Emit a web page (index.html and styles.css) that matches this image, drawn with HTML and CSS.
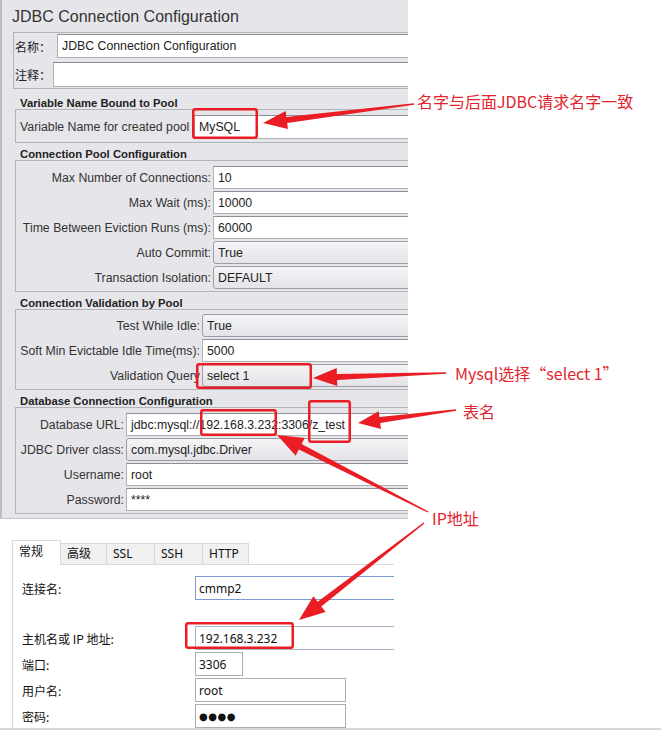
FILE: index.html
```html
<!DOCTYPE html>
<html>
  <head>
    <meta charset="utf-8" />
    <title>JDBC Connection Configuration</title>
    <meta name="viewport" content="width=device-width, initial-scale=1" />
    <link rel="stylesheet" href="styles.css">
  </head>
  <body>
    <div class="page">

      <!-- jmeter config panel -->
      <div class="jm">
        <div class="jm-title">JDBC Connection Configuration</div>

        <div class="jm-namebox">
          <div class="jm-namerow jm-namerow-first">
            <div class="jm-namelabel name-w1">名称：</div>
            <div class="jm-input">JDBC Connection Configuration</div>
          </div>
          <div class="jm-namerow jm-namerow-second">
            <div class="jm-namelabel name-w2">注释：</div>
            <div class="jm-input"></div>
          </div>
        </div>

        <div class="jm-legend">Variable Name Bound to Pool</div>
        <div class="jm-group jm-group-pool">
          <div class="jm-row jm-row-tall">
            <div class="jm-label label-left w-172">Variable Name for created pool</div>
            <div class="jm-input">MySQL</div>
          </div>
        </div>

        <div class="jm-legend">Connection Pool Configuration</div>
        <div class="jm-group">
          <div class="jm-row">
            <div class="jm-label w-191">Max Number of Connections:</div>
            <div class="jm-input">10</div>
          </div>
          <div class="jm-row">
            <div class="jm-label w-191">Max Wait (ms):</div>
            <div class="jm-input">10000</div>
          </div>
          <div class="jm-row">
            <div class="jm-label w-191">Time Between Eviction Runs (ms):</div>
            <div class="jm-input">60000</div>
          </div>
          <div class="jm-row">
            <div class="jm-label w-191">Auto Commit:</div>
            <div class="jm-combo">True</div>
          </div>
          <div class="jm-row">
            <div class="jm-label w-191">Transaction Isolation:</div>
            <div class="jm-combo">DEFAULT</div>
          </div>
        </div>

        <div class="jm-legend">Connection Validation by Pool</div>
        <div class="jm-group jm-group-valid">
          <div class="jm-row">
            <div class="jm-label w-180">Test While Idle:</div>
            <div class="jm-combo">True</div>
          </div>
          <div class="jm-row">
            <div class="jm-label w-180">Soft Min Evictable Idle Time(ms):</div>
            <div class="jm-input">5000</div>
          </div>
          <div class="jm-row">
            <div class="jm-label w-180">Validation Query</div>
            <div class="jm-combo">select 1</div>
          </div>
        </div>

        <div class="jm-legend">Database Connection Configuration</div>
        <div class="jm-group">
          <div class="jm-row">
            <div class="jm-label w-104">Database URL:</div>
            <div class="jm-input">jdbc:mysql://192.168.3.232:3306/z_test</div>
          </div>
          <div class="jm-row">
            <div class="jm-label w-104">JDBC Driver class:</div>
            <div class="jm-combo">com.mysql.jdbc.Driver</div>
          </div>
          <div class="jm-row">
            <div class="jm-label w-104">Username:</div>
            <div class="jm-input">root</div>
          </div>
          <div class="jm-row">
            <div class="jm-label w-104">Password:</div>
            <div class="jm-input">****</div>
          </div>
        </div>
      </div>

      <!-- navicat connection dialog -->
      <div class="nv">
        <div class="nv-tabs">
          <div class="nv-tab is-active">常规</div>
          <div class="nv-tab tab-46">高级</div>
          <div class="nv-tab tab-48">SSL</div>
          <div class="nv-tab tab-48">SSH</div>
          <div class="nv-tab tab-46">HTTP</div>
        </div>
        <div class="nv-panel">
          <div class="nv-row nv-row-gap">
            <div class="nv-label">连接名:</div>
            <div class="nv-input is-focus">cmmp2</div>
          </div>
          <div class="nv-row">
            <div class="nv-label">主机名或 IP 地址:</div>
            <div class="nv-input is-host">192.168.3.232</div>
          </div>
          <div class="nv-row">
            <div class="nv-label">端口:</div>
            <div class="nv-input is-port">3306</div>
          </div>
          <div class="nv-row">
            <div class="nv-label">用户名:</div>
            <div class="nv-input is-short">root</div>
          </div>
          <div class="nv-row">
            <div class="nv-label">密码:</div>
            <div class="nv-input is-short nv-dots">●●●●</div>
          </div>
        </div>
      </div>

      <!-- annotations drawn over the screenshots -->
      <svg class="marks" width="661" height="730" viewBox="0 0 661 730">
        <g fill="none" stroke="#ea1c24" stroke-width="2.5">
          <rect x="193.25" y="109.25" width="63.5" height="28.5" rx="2" />
          <rect x="197.25" y="364.25" width="113.5" height="23.5" rx="2" />
          <rect x="201.25" y="410.25" width="74.5" height="24.5" rx="2" />
          <rect x="309.25" y="401.25" width="40.5" height="40.5" rx="2" />
          <rect x="186.25" y="623.25" width="106.5" height="24.5" rx="2" />
        </g>
        <g fill="#ea1c24">
          <polygon points="413.9,103.3 286.4,117 285.7,111.1 263,123 287.9,128.9 287.2,123 414.1,104.7" />
          <polygon points="446,372.3 336.9,374.1 336.7,368.1 313,378 337.3,386.1 337.1,380.1 446,373.7" />
          <polygon points="455.9,409.3 379.4,417.1 378.6,411.2 358,423 381,429 380.2,423.1 456.1,410.7" />
          <polygon points="428.3,511.4 301.6,444.1 304.7,437.9 277,435 295.7,455.7 298.8,449.5 427.7,512.6" />
          <polygon points="423.6,522.4 317.7,601.7 313.4,596.2 299,620 325.6,612 321.3,606.5 424.4,523.6" />
        </g>
      </svg>

      <div class="note note-name">名字与后面JDBC请求名字一致</div>
      <div class="note note-query">Mysql选择“select 1”</div>
      <div class="note note-table">表名</div>
      <div class="note note-ip">IP地址</div>
    </div>
  </body>
</html>
```

FILE: styles.css
```css
body {
  margin: 0;
  background: #fff;
}

.page {
  position: relative;
  width: 661px;
  height: 730px;
  overflow: hidden;
  background: #fff;
}

/* jmeter panel */

.jm {
  width: 408px;
  height: 518px;
  overflow: hidden;
  background: #e6e6ea;
  box-shadow: inset 2px 0 #bdbdc3;
  border-bottom: 1px solid #c6c6cc;
  font-family: "Liberation Sans", Arial, "Noto Sans CJK SC", sans-serif;
  font-size: 12.3px;
  color: #333;
}

.jm-title {
  height: 30px;
  padding-top: 2px;
  line-height: 30px;
  padding-left: 12px;
  font-size: 16px;
  color: #333;
}

.jm-namebox {
  width: 440px;
  margin-left: 13px;
  padding: 1px 0 1px 1px;
  border: 1px solid #b3b3ba;
  margin-bottom: 3px;
}

.jm-namerow {
  display: flex;
  align-items: stretch;
}

.jm-namerow-first {
  height: 24px;
}

.jm-namerow-second {
  height: 25px;
  margin-top: 4px;
}

.jm-namelabel {
  display: flex;
  align-items: center;
  font-family: "Noto Sans CJK SC", sans-serif;
  font-size: 12px;
  color: #222;
}

.name-w1 {
  width: 42px;
}

.name-w2 {
  width: 38px;
}

.jm-legend {
  height: 17px;
  padding: 4px 0 0 20px;
  box-sizing: border-box;
  line-height: 14px;
  font-size: 11.3px;
  font-weight: bold;
  color: #222;
}

.jm-group {
  width: 440px;
  margin-left: 15px;
  padding: 5px 0 2px 4px;
  border: 1px solid #b3b3ba;
}

.jm-group-pool {
  padding-bottom: 3px;
}

.jm-group-valid {
  padding-top: 4px;
}

.jm-row {
  display: flex;
  align-items: stretch;
  height: 23px;
}

.jm-row + .jm-row {
  margin-top: 2px;
}

.jm-row-tall {
  height: 24px;
}

.jm-label {
  margin-right: 2px;
  text-align: right;
  white-space: nowrap;
  display: flex;
  align-items: center;
  justify-content: flex-end;
}

.label-left {
  justify-content: flex-start;
}

.w-172 { width: 172px; }
.w-191 { width: 191px; }
.w-180 { width: 180px; }
.w-104 { width: 104px; }

.jm-input,
.jm-combo {
  flex: 1;
  display: flex;
  align-items: center;
  padding-left: 4px;
  box-sizing: border-box;
  color: #222;
  white-space: nowrap;
}

.jm-input {
  background: #fff;
  border: 1px solid #b0b0b7;
  border-top-color: #8d8d95;
}

.jm-combo {
  background: linear-gradient(#f5f5f7, #e3e3e8);
  border: 1px solid #9d9da6;
  border-radius: 3px 0 0 3px;
}

/* navicat dialog */

.nv {
  height: 211px;
  box-sizing: border-box;
  padding-top: 21px;
  border-bottom: 2px solid #d6d6d6;
  font-family: "Noto Sans", "Noto Sans CJK SC", sans-serif;
  font-size: 12px;
  color: #111;
}

.nv-tabs {
  display: flex;
  align-items: flex-end;
  height: 24px;
  margin-left: 12px;
}

.nv-tab {
  height: 21px;
  box-sizing: border-box;
  padding-left: 6px;
  line-height: 19px;
  background: #f0f0f0;
  border: 1px solid #d9d9d9;
  border-left: none;
  border-bottom: none;
}

.nv-tab.is-active {
  width: 49px;
  height: 25px;
  margin-bottom: -1px;
  background: #fff;
  border-left: 1px solid #d9d9d9;
  line-height: 22px;
  position: relative;
}

.tab-46 { width: 46px; }
.tab-48 { width: 48px; }

.nv-panel {
  width: 382px;
  height: 170px;
  overflow: hidden;
  margin-left: 12px;
  padding-top: 11px;
  border-top: 1px solid #d9d9d9;
  border-left: 1px solid #d9d9d9;
  box-sizing: border-box;
}

.nv-row {
  display: flex;
  align-items: stretch;
  height: 24px;
}

.nv-row + .nv-row {
  margin-top: 2px;
}

.nv-row-gap {
  margin-bottom: 26px;
}

.nv-label {
  width: 173px;
  padding-left: 9px;
  display: flex;
  align-items: center;
  font-family: "Noto Sans CJK SC", sans-serif;
  white-space: nowrap;
}

.nv-input {
  flex: 1;
  display: flex;
  align-items: center;
  padding-left: 3px;
  border: 1px solid #abadb3;
  border-right: none;
  box-sizing: border-box;
}

.nv-input.is-focus {
  border-color: #7b9bd3;
}

.nv-input.is-host {
  border-color: #aab4c6;
}

.nv-input.is-port {
  flex: none;
  width: 48px;
  border-right: 1px solid #abadb3;
}

.nv-input.is-short {
  flex: none;
  width: 151px;
  border-right: 1px solid #abadb3;
}

.nv-dots {
  font-family: "DejaVu Sans", sans-serif;
  font-size: 10px;
  letter-spacing: 0.5px;
}

/* annotations */

.marks {
  position: absolute;
  left: 0;
  top: 0;
}

.note {
  position: absolute;
  font-family: "Noto Sans CJK SC", sans-serif;
  font-size: 16px;
  line-height: 20px;
  color: #e3242d;
  white-space: nowrap;
}

.note-name {
  left: 417px;
  top: 91px;
}

.note-query {
  left: 455px;
  top: 363px;
}

.note-table {
  left: 463px;
  top: 401px;
}

.note-ip {
  left: 432px;
  top: 508px;
}
```
